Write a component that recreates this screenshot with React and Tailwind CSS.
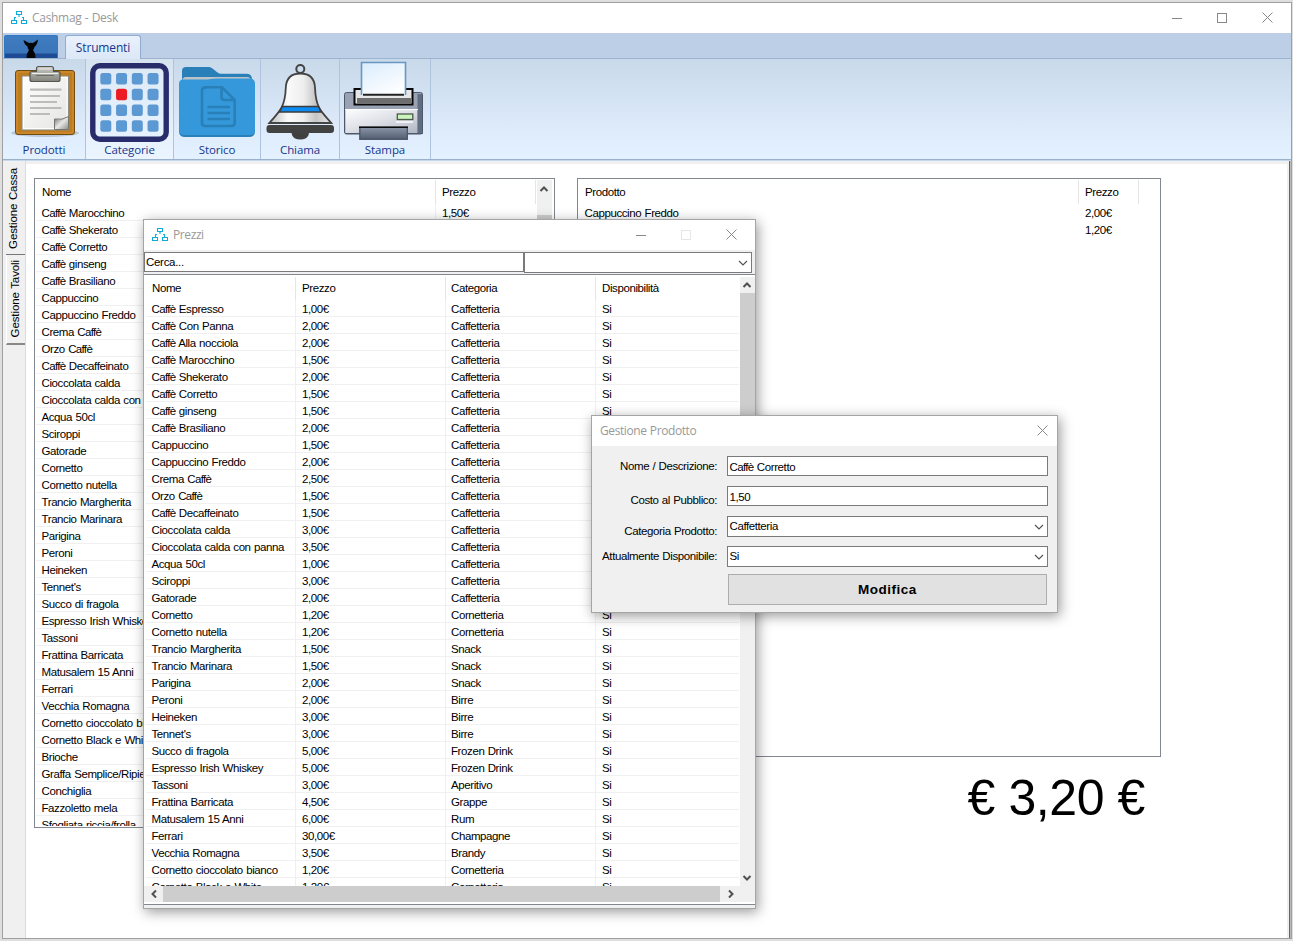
import React from "react";

const cassa = [
  "Caffè Marocchino", "Caffè Shekerato", "Caffè Corretto", "Caffè ginseng", "Caffè Brasiliano",
  "Cappuccino", "Cappuccino Freddo", "Crema Caffè", "Orzo Caffè", "Caffè Decaffeinato",
  "Cioccolata calda", "Cioccolata calda con panna", "Acqua 50cl", "Sciroppi", "Gatorade",
  "Cornetto", "Cornetto nutella", "Trancio Margherita", "Trancio Marinara", "Parigina",
  "Peroni", "Heineken", "Tennet's", "Succo di fragola", "Espresso Irish Whiskey", "Tassoni",
  "Frattina Barricata", "Matusalem 15 Anni", "Ferrari", "Vecchia Romagna",
  "Cornetto cioccolato bianco", "Cornetto Black e White", "Brioche", "Graffa Semplice/Ripiena",
  "Conchiglia", "Fazzoletto mela", "Sfogliata riccia/frolla",
];

const prezzi = [
  ["Caffè Espresso", "1,00€", "Caffetteria"],
  ["Caffè Con Panna", "2,00€", "Caffetteria"],
  ["Caffè Alla nocciola", "2,00€", "Caffetteria"],
  ["Caffè Marocchino", "1,50€", "Caffetteria"],
  ["Caffè Shekerato", "2,00€", "Caffetteria"],
  ["Caffè Corretto", "1,50€", "Caffetteria"],
  ["Caffè ginseng", "1,50€", "Caffetteria"],
  ["Caffè Brasiliano", "2,00€", "Caffetteria"],
  ["Cappuccino", "1,50€", "Caffetteria"],
  ["Cappuccino Freddo", "2,00€", "Caffetteria"],
  ["Crema Caffè", "2,50€", "Caffetteria"],
  ["Orzo Caffè", "1,50€", "Caffetteria"],
  ["Caffè Decaffeinato", "1,50€", "Caffetteria"],
  ["Cioccolata calda", "3,00€", "Caffetteria"],
  ["Cioccolata calda con panna", "3,50€", "Caffetteria"],
  ["Acqua 50cl", "1,00€", "Caffetteria"],
  ["Sciroppi", "3,00€", "Caffetteria"],
  ["Gatorade", "2,00€", "Caffetteria"],
  ["Cornetto", "1,20€", "Cornetteria"],
  ["Cornetto nutella", "1,20€", "Cornetteria"],
  ["Trancio Margherita", "1,50€", "Snack"],
  ["Trancio Marinara", "1,50€", "Snack"],
  ["Parigina", "2,00€", "Snack"],
  ["Peroni", "2,00€", "Birre"],
  ["Heineken", "3,00€", "Birre"],
  ["Tennet's", "3,00€", "Birre"],
  ["Succo di fragola", "5,00€", "Frozen Drink"],
  ["Espresso Irish Whiskey", "5,00€", "Frozen Drink"],
  ["Tassoni", "3,00€", "Aperitivo"],
  ["Frattina Barricata", "4,50€", "Grappe"],
  ["Matusalem 15 Anni", "6,00€", "Rum"],
  ["Ferrari", "30,00€", "Champagne"],
  ["Vecchia Romagna", "3,50€", "Brandy"],
  ["Cornetto cioccolato bianco", "1,20€", "Cornetteria"],
  ["Cornetto Black e White", "1,20€", "Cornetteria"],
];

/* "Caffè" is set tighter than the rest of the text */
function Label({ children }) {
  const parts = children.split("Caffè");
  return (
    <span className="whitespace-pre">
      {parts.map((p, i) => (
        <React.Fragment key={i}>
          {i > 0 && <span className="tracking-[-0.65px]">Caffè</span>}
          {p}
        </React.Fragment>
      ))}
    </span>
  );
}

function AppIcon() {
  return (
    <svg className="h-4 w-4 shrink-0" viewBox="0 0 16 16" fill="none" stroke="#12aada" strokeWidth="1.1">
      <path d="M5.500 1.500h5v3h-5zM8 4.500V7" />
      <path d="M.5 10.500h5v3h-5zM10.500 10.500h5v3h-5z" />
      <path d="M3.500 10.500V7.500h1.500M12.500 10.500V7.500H11" />
    </svg>
  );
}

function CloseIcon() {
  return (
    <svg className="relative -left-px -top-px h-[11px] w-[11px]" viewBox="0 0 11 11" stroke="#888" strokeWidth="1">
      <path d="M.5.5l10 10M10.5.5l-10 10" />
    </svg>
  );
}

function Chevron({ className }) {
  return (
    <svg className={className} viewBox="0 0 10 10" fill="none" stroke="#505050" strokeWidth="2">
      <path d="M1.5 7L5 3.5 8.500 7" />
    </svg>
  );
}

function ComboArrow() {
  return (
    <svg className="h-[10px] w-[10px]" viewBox="0 0 10 10" fill="none" stroke="#555" strokeWidth="1.2">
      <path d="M1 3l4 4 4-4" />
    </svg>
  );
}

function Prodotti() {
  return (
    <svg className="h-[82px] w-full shrink-0" viewBox="3 59 82 82">
      <defs>
        <linearGradient id="paper" x1="0" y1="0" x2="1" y2="1">
          <stop offset="0" stopColor="#fff" /><stop offset="1" stopColor="#e4e4e2" />
        </linearGradient>
        <linearGradient id="clip" x1="0" y1="0" x2="0" y2="1">
          <stop offset="0" stopColor="#c9cac4" /><stop offset="1" stopColor="#83857d" />
        </linearGradient>
        <linearGradient id="curl" x1="0" y1="0" x2="1" y2="1">
          <stop offset="0" stopColor="#666864" /><stop offset=".5" stopColor="#e8e8e6" /><stop offset="1" stopColor="#8a8c87" />
        </linearGradient>
      </defs>
      <ellipse cx="45" cy="133" rx="34" ry="4" fill="#66788a" opacity=".3" />
      <rect x="15.500" y="70.500" width="59" height="64" rx="2.500" fill="#c17d1c" stroke="#704c10" />
      <rect x="17" y="72" width="56" height="61" rx="1" fill="none" stroke="#d0913a" />
      <path d="M22 76h46.500v54H22z" fill="url(#paper)" stroke="#8c8b84" />
      <path d="M23.500 77.500h43.500v51H23.500z" fill="none" stroke="#fff" />
      <path d="M30 89.700h31.500M30 96h30M30 102h27M30 108h31.500M30 114h20" stroke="#bcbcbc" strokeWidth="2.200" />
      <path d="M54.500 129.500v-10.500q8 1.500 14-2.500v13z" fill="url(#curl)" stroke="#75776f" />
      <path d="M32 71.500h4.500v-3q0-2 2-2h13q2 0 2 2v3H58q2 0 2 2v6q0 2-2 2H32q-2 0-2-2v-6q0-2 2-2z" fill="url(#clip)" stroke="#555753" strokeWidth="1.200" />
      <path d="M32 73.500h26M38.500 69h13" stroke="#eeeeec" />
      <path d="M36 75.500h18" stroke="#6c6d68" />
    </svg>
  );
}

function Categorie() {
  return (
    <svg className="h-[84px] w-full shrink-0" viewBox="86 59 87 84">
      <rect x="92.800" y="65.800" width="73.400" height="73.400" rx="7" fill="#e6f3ff" fillOpacity=".4" stroke="#282c6b" strokeWidth="5.400" />
      {[0, 1, 2, 3].map((r) =>
        [0, 1, 2, 3].map((c) => (
          <rect key={r * 4 + c} x={100.300 + c * 15.750} y={73 + r * 15.750} width="11" height="11.500" rx="2.500"
            fill={r === 1 && c === 1 ? "#ed1c24" : "#5c99d2"} />
        ))
      )}
    </svg>
  );
}

function Storico() {
  return (
    <svg className="h-[82px] w-full shrink-0" viewBox="174 59 86 82">
      <path d="M182 82V71q0-4 4-4h23q2 0 3.500 1.500l5 4q1.500 1.300 4 1.300h25q5 0 5.500 5V84h-70z" fill="#2980b9" />
      <path d="M182 82q0-5 4-5h61q4 0 4 4v3h-69z" fill="#bdc3c7" />
      <path d="M179 84v47q0 6 6 6h64q6 0 6-6V84z" fill="#2980b9" />
      <path d="M179 84q0-4.500 4-4.500h22q3 0 5.500-.5t6.500-.5h33q5 0 5 5.500v45q0 6-5.500 6h-65q-5.500 0-5.500-6z" fill="#3498db" />
      <g fill="none" stroke="#2980b9" strokeWidth="2.600">
        <path d="M205 87.300h17l12.700 12.700v23q0 3-3 3H205q-3 0-3-3V90.300q0-2.700 3-2.700z" />
        <path d="M221.500 87v10q0 3 3 3h10" />
        <path d="M207.500 107H230M207.500 113H230M207.500 119H230" />
      </g>
    </svg>
  );
}

function Chiama() {
  return (
    <svg className="h-[82px] w-full shrink-0" viewBox="261 59 78 82">
      <defs>
        <linearGradient id="bell" x1="0" y1="0" x2="1" y2="0">
          <stop offset="0" stopColor="#bcbcbc" /><stop offset=".3" stopColor="#fafafa" />
          <stop offset=".55" stopColor="#eee" /><stop offset=".75" stopColor="#c5c5c5" /><stop offset="1" stopColor="#e9e9e9" />
        </linearGradient>
      </defs>
      <circle cx="300.300" cy="69" r="4" fill="none" stroke="#444" strokeWidth="2" />
      <path d="M292 135q2 4.500 8.300 4.500t8.300-4.500l.4-2.500h-17.500z" fill="#404040" />
      <path d="M300.300 73.500c-9 0-14 5-14.500 14-.3 9-1.500 15-4.500 20.500-3 5.500-7 9-12 15h62c-5-6-9-9.500-12-15-3-5.500-4-11.500-4.300-20.500-.5-9-5.700-14-14.700-14z" fill="url(#bell)" stroke="#444" strokeWidth="1.800" />
      <path d="M282.500 106.500h35.800l2.700 5.500h-41.500z" fill="#0c8bf2" stroke="#3c3c3c" strokeWidth="1.500" />
      <rect x="266.500" y="125" width="67.500" height="8" rx="3" fill="#424242" />
    </svg>
  );
}

function Stampa() {
  return (
    <svg className="h-[82px] w-full shrink-0" viewBox="340 59 90 82">
      <defs>
        <linearGradient id="sheet" x1="0" y1="0" x2=".6" y2="1">
          <stop offset="0" stopColor="#d9ecfc" /><stop offset="1" stopColor="#fdfeff" />
        </linearGradient>
        <linearGradient id="body" x1="0" y1="0" x2=".9" y2="1">
          <stop offset="0" stopColor="#fdfdfe" /><stop offset=".5" stopColor="#dfe1e8" /><stop offset="1" stopColor="#b4b9c6" />
        </linearGradient>
        <linearGradient id="tray" x1="0" y1="0" x2="0" y2="1">
          <stop offset="0" stopColor="#8a95a8" /><stop offset="1" stopColor="#525d70" />
        </linearGradient>
      </defs>
      <rect x="344.500" y="92.500" width="78" height="41.500" rx="2" fill="#98a2b3" stroke="#4d586c" />
      <path d="M345.500 109.500h72v23.500h-72z" fill="url(#body)" />
      <path d="M417.500 94h4.500v39h-4.500z" fill="#606c80" />
      <path d="M345 109.500h73" stroke="#fff" />
      <path d="M345 133.500h78" stroke="#4d586c" />
      <rect x="354.500" y="89" width="58" height="15.500" fill="#e6e6e6" stroke="#080808" strokeWidth="2" />
      <path d="M357 98h54v5.500h-54z" fill="#6e6e6e" />
      <path d="M361.500 62.500h44V95h-44z" fill="url(#sheet)" />
      <path d="M361.500 95V62.500h44V95" fill="none" stroke="#6a96c2" strokeWidth="1.600" />
      <path d="M363 94.800h41" stroke="#222" strokeWidth="2" />
      <rect x="397.300" y="114" width="15.500" height="5.500" fill="#ccf5bd" stroke="#4d584c" strokeWidth="1.300" />
      <path d="M396 122h17" stroke="#fff" strokeWidth="1.400" />
      <rect x="359.800" y="127.300" width="47.500" height="12" fill="url(#tray)" stroke="#4a5568" strokeWidth="1.300" />
      <path d="M359 127.200h49" stroke="#0a0a0a" strokeWidth="1.600" />
    </svg>
  );
}

function RibbonGroup({ className, label, children }) {
  return (
    <div className={"flex h-full shrink-0 flex-col border-r border-[#adc3de] " + className}>
      <div className="flex h-[82px]">{children}</div>
      <div className="text-center font-['Open_Sans',sans-serif] text-[11.5px] leading-[18px] text-[#15368c]">{label}</div>
    </div>
  );
}

function Field({ className, labelClass, label, value, combo }) {
  return (
    <div className={"flex " + className}>
      <div className={"w-[125px] shrink-0 text-right " + labelClass}><Label>{label}</Label></div>
      <div className="ml-[10px] flex w-[321px] items-center justify-between border border-[#7a7a7a] bg-white pr-[3px] pl-[1.5px]">
        <span className={combo ? "leading-[17px]" : "pt-[2px] leading-[17px]"}><Label>{value}</Label></span>
        {combo && <ComboArrow />}
      </div>
    </div>
  );
}

function PrezziWindow() {
  return (
    <div className="absolute left-[143px] top-[219px] flex h-[690px] w-[613px] flex-col border border-[#a5a5a5] bg-[#f0f0f0] shadow-[2px_3px_12px_rgba(0,0,0,0.4)]">
      <div className="flex h-[30px] shrink-0 items-center bg-white pl-2 font-['Open_Sans',sans-serif] text-[12px] text-[#999]">
        <AppIcon />
        <span className="ml-[5px] tracking-[-0.4px]">Prezzi</span>
        <div className="ml-auto mr-[17px] flex items-center">
          <div className="h-px w-[10px] bg-[#888]" />
          <div className="ml-[35px] h-[10px] w-[10px] border border-[#e6e6e6]" />
          <div className="ml-[36px]"><CloseIcon /></div>
        </div>
      </div>
      <div className="flex h-[24px] shrink-0 items-start pt-[2px]">
        <div className="h-[20px] w-[380px] border border-[#7a7a7a] bg-white pl-[1px] leading-[18px] tracking-[-0.3px]">Cerca...</div>
        <div className="flex h-[21px] w-[228px] items-center justify-end border border-[#7a7a7a] bg-white pr-[3px]"><ComboArrow /></div>
      </div>
      <div className="flex h-[631px] shrink-0 flex-col border-b border-t border-[#828790] bg-white pt-[2px]">
        <div className="flex h-[609px]">
          <div className="flex h-full w-[596px] flex-col overflow-hidden pl-[2px]">
            <div className="flex h-[23px] shrink-0 leading-[22px]">
              <div className="w-[150px] border-r border-[#e5e5e5] pl-[6px]">Nome</div>
              <div className="w-[150px] border-r border-[#e5e5e5] pl-[6px]">Prezzo</div>
              <div className="w-[150px] border-r border-[#e5e5e5] pl-[5px]">Categoria</div>
              <div className="pl-[6px]">Disponibilità</div>
            </div>
            {prezzi.map(([n, p, c], i) => (
              <div key={i} className="flex h-[17px] w-[593px] shrink-0 border-b border-[#f0f0f0] leading-[19px]">
                <div className="w-[150px] border-r border-[#f0f0f0] pl-[5.500px]"><Label>{n}</Label></div>
                <div className="w-[150px] border-r border-[#f0f0f0] pl-[6px]">{p}</div>
                <div className="w-[150px] border-r border-[#f0f0f0] pl-[5px]">{c}</div>
                <div className="pl-[6px]">Si</div>
              </div>
            ))}
          </div>
          <div className="flex w-[15px] flex-col items-center bg-[#f0f0f0] pb-[3px] pt-[3px]">
            <Chevron className="mr-px h-[10px] w-[10px] shrink-0" />
            <div className="mt-[3px] h-[230px] w-full shrink-0 bg-[#cdcdcd]" />
            <Chevron className="mr-px mt-auto h-[10px] w-[10px] shrink-0 rotate-180" />
          </div>
        </div>
        <div className="flex h-[16px] items-center bg-[#f0f0f0] pl-[5px]">
          <Chevron className="h-[10px] w-[10px] -rotate-90" />
          <div className="ml-[4px] h-full w-[557px] bg-[#cdcdcd]" />
          <Chevron className="ml-[6px] h-[10px] w-[10px] rotate-90" />
        </div>
      </div>
    </div>
  );
}

function ProdottoDialog() {
  return (
    <div className="absolute left-[591px] top-[415px] flex h-[198px] w-[467px] flex-col border border-[#a5a5a5] bg-[#f0f0f0] shadow-[2px_3px_12px_rgba(0,0,0,0.4)]">
      <div className="flex h-[30px] shrink-0 items-center justify-between bg-white pl-2 pr-[8px] font-['Open_Sans',sans-serif] text-[12px] tracking-[-0.4px] text-[#999]">
        Gestione Prodotto
        <CloseIcon />
      </div>
      <Field className="mt-[10px] h-[20px]" labelClass="leading-[20px]" label="Nome / Descrizione:" value="Caffè Corretto" />
      <Field className="mt-[10px] h-[20px]" labelClass="pt-[4px] leading-[20px]" label="Costo al Pubblico:" value="1,50" />
      <Field className="mt-[10px] h-[21px]" labelClass="pt-[5px] leading-[20px]" label="Categoria Prodotto:" value="Caffetteria" combo />
      <Field className="mt-[9px] h-[21px]" labelClass="leading-[20px]" label="Attualmente Disponibile:" value="Si" combo />
      <div className="ml-[136px] mt-[7px] flex h-[31px] w-[319px] items-center justify-center border border-[#adadad] bg-[#e1e1e1] pt-px text-[13.500px] font-bold tracking-[0.5px]">Modifica</div>
    </div>
  );
}

export default function App() {
  return (
    <div className="relative h-[941px] w-[1293px] overflow-hidden bg-[#dedede] pl-[2px] pt-[2px] font-['Liberation_Sans',Arial,sans-serif] text-[11.5px] tracking-[-0.4px] text-black [word-spacing:0.5px]">
      <div className="flex h-[937px] w-[1290px] flex-col border border-[#a0a0a0] bg-white">
        <div className="flex h-[30px] shrink-0 items-center pl-2 font-['Open_Sans',sans-serif] text-[12px] tracking-[-0.3px] text-[#999]">
          <AppIcon />
          <span className="ml-[5px]">Cashmag - Desk</span>
          <div className="ml-auto mr-[17px] flex items-center">
            <div className="h-px w-[10px] bg-[#888]" />
            <div className="ml-[35px] h-[10px] w-[10px] border border-[#888]" />
            <div className="ml-[36px]"><CloseIcon /></div>
          </div>
        </div>

        <div className="flex h-[26px] shrink-0 border-b border-[#9db3d0] bg-[#bdcfe7] pt-[2px]">
          <div className="ml-px flex h-[23px] w-[54px] justify-center rounded-t-[2px] border border-b-0 border-[#2f79c8] bg-[linear-gradient(to_bottom,#3f7cc0_0,#3b75ba_17px,#1d4c95_18px,#1d4c95_100%)]">
            <svg className="h-[22px] w-[20px]" viewBox="0 0 20 22">
              <path d="M2.500 4l5.500 3q2-.7 4 0l5-3.500q-.5 5-3.500 7.500-.5 2-1.500 3 2.500 3 2.500 8H5.500q0-5 2.500-8-1.500-1.500-1.500-3.500Q3 8 2.500 4z" fill="#030507" />
            </svg>
          </div>
          <div className="ml-[7px] h-[24px] w-[76px] rounded-t-[3px] border border-b-0 border-[#93abce] bg-[linear-gradient(to_bottom,#e9f1fc,#dce8f7)] text-center font-['Open_Sans',sans-serif] text-[12px] leading-[24px] tracking-[-0.15px] text-[#15368c]">Strumenti</div>
        </div>

        <div className="flex h-[101px] shrink-0 border-b border-[#9ab1cb] bg-[linear-gradient(to_bottom,#c8d9ea,#dfecfc_75%,#e4f1ff)] tracking-[-0.1px]">
          <RibbonGroup className="w-[83px]" label="Prodotti"><Prodotti /></RibbonGroup>
          <RibbonGroup className="w-[88px] bg-white/25" label="Categorie"><Categorie /></RibbonGroup>
          <RibbonGroup className="w-[87px]" label="Storico"><Storico /></RibbonGroup>
          <RibbonGroup className="w-[79px]" label="Chiama"><Chiama /></RibbonGroup>
          <RibbonGroup className="w-[91px]" label="Stampa"><Stampa /></RibbonGroup>
        </div>

        <div className="flex min-h-0 flex-1 border-t border-[#c5d8ee] bg-[#f0f0f0]">
          <div className="flex w-[23px] shrink-0 flex-col border-r border-[#dcdcdc] pl-[3px] pt-[2px] text-[11.5px] tracking-[-0.1px]">
            <div className="flex h-[92px] items-center justify-center border-b border-[#777] pr-[3px]">
              <span className="rotate-180 whitespace-nowrap [writing-mode:vertical-rl]">Gestione Cassa</span>
            </div>
            <div className="flex h-[90px] items-center justify-center border-b-2 border-l border-b-[#888] border-l-white pr-[1px]">
              <span className="rotate-180 whitespace-nowrap [writing-mode:vertical-rl]">Gestione Tavoli</span>
            </div>
          </div>
          <div className="mt-[3px] flex flex-1 items-start bg-white pl-[8px] pt-[14px]">
            <div className="flex h-[650px] w-[521px] shrink-0 border border-[#828790] pb-px pl-px pt-px">
              <div className="flex w-[501px] flex-col overflow-hidden">
                <div className="flex h-[24px] shrink-0 leading-[24px]">
                  <div className="w-[400px] border-r border-[#e5e5e5] pl-[6px]">Nome</div>
                  <div className="w-[100px] border-r border-[#e5e5e5] pl-[6px]">Prezzo</div>
                </div>
                {cassa.map((n, i) => (
                  <div key={i} className="flex h-[17px] shrink-0 border-b border-[#f0f0f0] leading-[19px]">
                    <div className="w-[400px] border-r border-[#f0f0f0] pl-[5.500px]"><Label>{n}</Label></div>
                    <div className="pl-[6px]">{i === 0 ? "1,50€" : ""}</div>
                  </div>
                ))}
              </div>
              <div className="flex w-[15px] flex-col items-center bg-[#f0f0f0] pt-[4px]">
                <Chevron className="mr-px h-[10px] w-[10px] shrink-0" />
                <div className="mt-[21px] h-[300px] w-full bg-[#cdcdcd]" />
              </div>
            </div>
            <div className="ml-[22px] flex w-[584px] shrink-0 flex-col">
              <div className="h-[579px] border border-[#828790] pl-px pt-px">
                <div className="flex h-[24px] leading-[24px]">
                  <div className="w-[500px] border-r border-[#e5e5e5] pl-[6px]">Prodotto</div>
                  <div className="w-[60px] border-r border-[#e5e5e5] pl-[6px]">Prezzo</div>
                </div>
                <div className="flex h-[17px] leading-[19px]">
                  <div className="w-[500px] pl-[5.500px]">Cappuccino Freddo</div>
                  <div className="pl-[6px]">2,00€</div>
                </div>
                <div className="flex h-[17px] leading-[19px]">
                  <div className="w-[500px]" />
                  <div className="pl-[6px]">1,20€</div>
                </div>
              </div>
              <div className="mt-[12px] pr-[16px] text-right text-[50px] leading-[58px] tracking-[-0.4px] [word-spacing:0px]">€ 3,20 €</div>
            </div>
          </div>
          <div className="w-[2px]" />
          <div className="w-[2px] border-r border-[#bbb] bg-[#666]" />
        </div>
      </div>
      <PrezziWindow />
      <ProdottoDialog />
    </div>
  );
}
